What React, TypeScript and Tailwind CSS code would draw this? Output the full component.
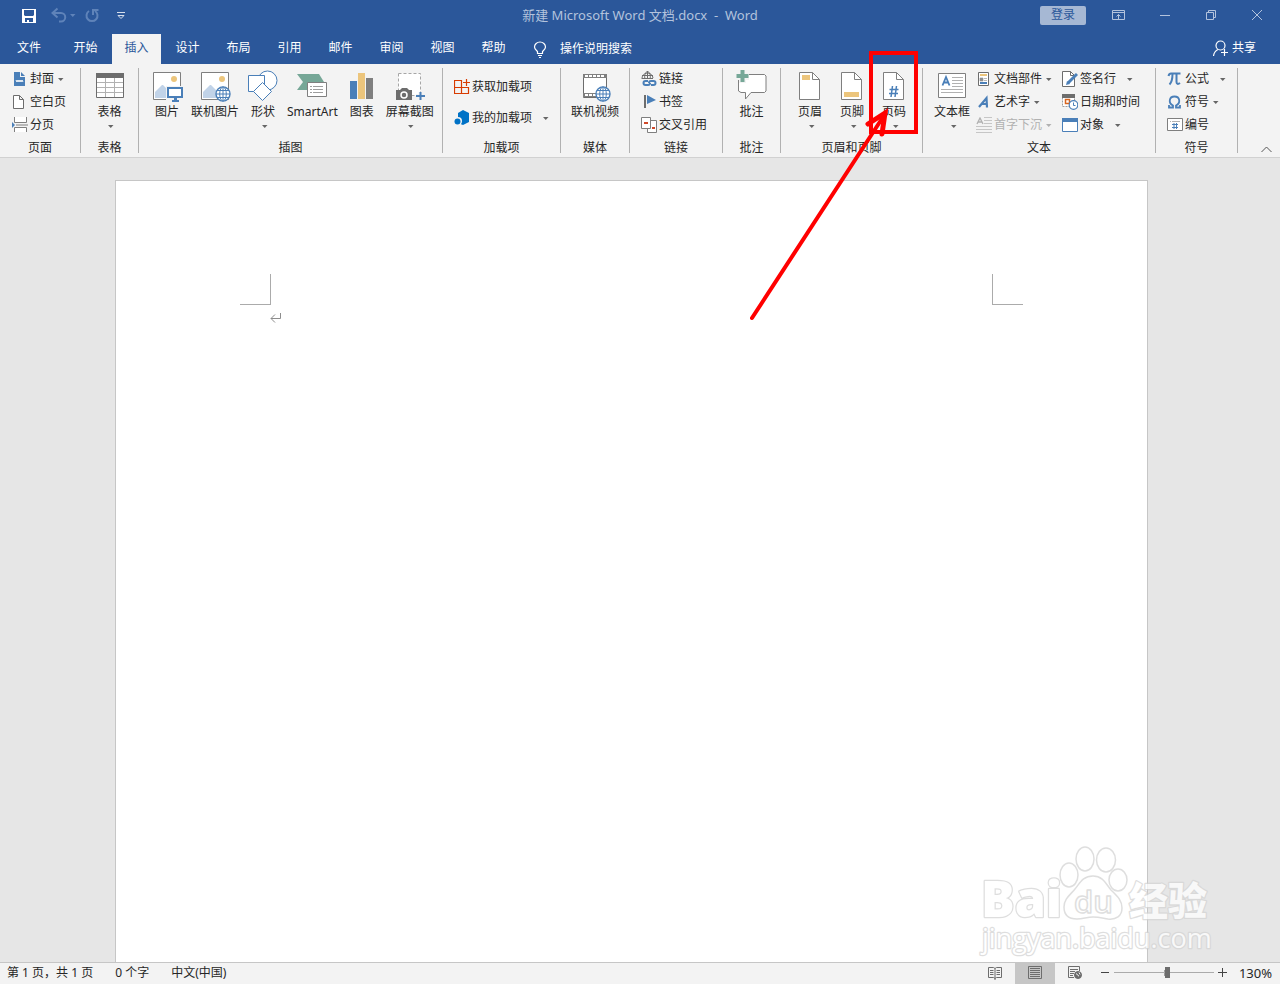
import React from 'react';

type IconProps = { children: React.ReactNode };

const Icon32: React.FC<IconProps> = ({ children }) => (
  <svg className="h-8 w-8 shrink-0" viewBox="0 0 32 32" fill="none" aria-hidden="true">
    {children}
  </svg>
);

const Icon16: React.FC<IconProps> = ({ children }) => (
  <svg className="h-4 w-4 shrink-0" viewBox="0 0 16 16" fill="none" aria-hidden="true">
    {children}
  </svg>
);

const Arrow: React.FC = () => (
  <svg className="h-2 w-[9px] shrink-0" viewBox="0 0 9 8" aria-hidden="true">
    <path d="M3 3h5.500L5.750 6z" fill="currentColor" />
  </svg>
);

const Globe: React.FC<{ x: number; y: number }> = ({ x, y }) => (
  <g transform={`translate(${x} ${y})`} stroke="#4a7fb8" fill="#fff">
    <circle r="7" strokeWidth="1.4" />
    <ellipse rx="3.3" ry="7" />
    <path d="M0-7V7M-7 0H7M-6-3.5H6M-6 3.5H6" />
  </g>
);

const Picture: React.FC = () => (
  <>
    <path d="M2.5 2.5h27v27h-27z" fill="#fff" stroke="#7f7f7f" />
    <circle cx="23" cy="9" r="3" fill="#ecc57c" />
    <path d="M4 28v-6l7-7h1l5 5v8z" fill="#c1d3e8" />
  </>
);

const Sheet: React.FC<IconProps> = ({ children }) => (
  <>
    <path d="M5.5 2.5h13l7 7v20h-20z" fill="#fff" stroke="#7f7f7f" />
    <path d="M18.5 2.5v7h7" stroke="#7f7f7f" />
    {children}
  </>
);

// Large button: icon on top, label and optional menu arrow below it
const BigButton: React.FC<{ label: string; icon: React.ReactNode; menu?: boolean }> = ({ label, icon, menu }) => (
  <button type="button" className="flex flex-col items-center whitespace-nowrap pt-[2px]">
    <Icon32>{icon}</Icon32>
    <span className="leading-5">{label}</span>
    {menu && <span className="text-[#666]"><Arrow /></span>}
  </button>
);

const SmallButton: React.FC<{
  label: string;
  icon: React.ReactNode;
  menu?: 'near' | 'far';
  disabled?: boolean;
  tall?: boolean;
}> = ({ label, icon, menu, disabled, tall }) => (
  <button
    type="button"
    disabled={disabled}
    className={`flex items-center whitespace-nowrap ${tall ? 'h-[31px]' : 'h-[21px]'} ${disabled ? 'text-[#b1b1b1]' : ''}`}
  >
    <Icon16>{icon}</Icon16>
    <span className="ml-[2px]">{label}</span>
    {menu && (
      <span className={`${menu === 'far' ? 'ml-[8px]' : 'ml-[1px]'} ${disabled ? 'text-[#b1b1b1]' : 'text-[#666]'}`}>
        <Arrow />
      </span>
    )}
  </button>
);

const Group: React.FC<{ title: string; className: string; children: React.ReactNode }> = ({ title, className, children }) => (
  <section aria-label={title} className={`flex h-[85px] shrink-0 flex-col justify-between border-r border-[#b1b1b1] ${className}`}>
    <div className="flex items-start">{children}</div>
    <div className="text-center leading-[10px]">{title}</div>
  </section>
);

const Column: React.FC<{ children: React.ReactNode; className?: string }> = ({ children, className = '' }) => (
  <div className={`flex flex-col items-start gap-[2px] ${className}`}>{children}</div>
);

const TitleBar: React.FC = () => (
  <div className="flex h-[30px] items-center text-[#b3c3dd]">
    <div className="flex flex-1 items-center">
      <button type="button" aria-label="保存" className="ml-[21px]">
        <svg className="h-4 w-4" viewBox="0 0 16 16" aria-hidden="true">
          <path d="M1 2h14v14H1z" fill="#fff" />
          <path d="M3 3h10v5l-1 1H4L3 8zM4 11h8v4h-4v-2H6v2H4z" fill="#2b579a" />
        </svg>
      </button>
      <button type="button" aria-label="撤消" className="ml-[14px] flex items-center text-[#5f83b9]">
        <svg className="h-4 w-4" viewBox="0 0 16 16" fill="none" stroke="currentColor" strokeWidth="2" aria-hidden="true">
          <path d="M6.500 1.500 1.500 6l5 4.500M2 6h8a4 4 0 0 1 0 8.500H8" />
        </svg>
        <Arrow />
      </button>
      <button type="button" aria-label="重复" className="ml-[8px] text-[#5f83b9]">
        <svg className="h-4 w-4" viewBox="0 0 16 16" fill="none" stroke="currentColor" strokeWidth="2" aria-hidden="true">
          <path d="M5 4a5.500 5.500 0 1 0 6 0M9 8V3h5.500" />
        </svg>
      </button>
      <button type="button" aria-label="自定义快速访问工具栏" className="ml-[17px]">
        <svg className="h-3 w-[9px]" viewBox="0 0 9 12" fill="none" stroke="#d5deec" aria-hidden="true">
          <path d="M0 3.500h8M1 6.500l3 3 3-3z" />
        </svg>
      </button>
    </div>
    <h1 className="whitespace-pre text-[13px]">新建 Microsoft Word 文档.docx  -  Word</h1>
    <div className="flex flex-1 items-center justify-end">
      <button type="button" className="mr-[10px] h-[19px] w-[46px] rounded-[2px] bg-[#a6b8d4] leading-[18px] text-[#2b579a]">
        登录
      </button>
      <button type="button" aria-label="功能区显示选项" className="flex w-[46px] justify-center">
        <svg className="h-4 w-4" viewBox="0 0 16 16" fill="none" stroke="#b3c3dd" aria-hidden="true">
          <path d="M1.500 3.500h12v9h-12zM1.500 5.500h12M7.500 12V7.500M5.500 9.500l2-2 2 2" />
        </svg>
      </button>
      <button type="button" aria-label="最小化" className="flex w-[46px] justify-center">
        <svg className="h-4 w-4" viewBox="0 0 16 16" stroke="#b3c3dd" aria-hidden="true">
          <path d="M3 8.500h10" />
        </svg>
      </button>
      <button type="button" aria-label="向下还原" className="flex w-[46px] justify-center">
        <svg className="h-4 w-4" viewBox="0 0 16 16" fill="none" stroke="#b3c3dd" aria-hidden="true">
          <path d="M3.500 5.500h7v7h-7zM5.500 5.500v-2h7v7h-2" />
        </svg>
      </button>
      <button type="button" aria-label="关闭" className="flex w-[46px] justify-center">
        <svg className="h-4 w-4" viewBox="0 0 16 16" stroke="#b3c3dd" aria-hidden="true">
          <path d="m3 3 10 10M13 3 3 13" />
        </svg>
      </button>
    </div>
  </div>
);

const tabs = ['开始', '插入', '设计', '布局', '引用', '邮件', '审阅', '视图', '帮助'];

const TabRow: React.FC = () => (
  <nav className="mt-1 flex h-[30px] items-stretch text-white">
    <button type="button" className="mr-[2px] w-[58px] pb-[2px]">文件</button>
    <div className="flex gap-[2px] pl-px">
      {tabs.map((tab) => (
        <button
          key={tab}
          type="button"
          className={`w-[49px] pb-[2px] ${tab === '插入' ? 'bg-[#f3f3f3] text-[#2b579a]' : ''}`}
        >
          {tab}
        </button>
      ))}
    </div>
    <button type="button" className="ml-[14px] flex items-center gap-3">
      <svg className="h-[17px] w-4" viewBox="0 0 16 17" fill="none" stroke="#fff" strokeWidth="1.200" aria-hidden="true">
        <path d="M5.500 12.500v-2C4 9 2.500 8 2.500 6a5.500 5 0 0 1 11 0c0 2-1.500 3-3 4.500v2zM6 14.500h4M7 16.500h2" />
      </svg>
      操作说明搜索
    </button>
    <button type="button" className="ml-auto mr-6 flex items-center gap-[3px] pb-[2px]">
      <svg className="h-4 w-4" viewBox="0 0 16 16" fill="none" stroke="#fff" strokeWidth="1.200" aria-hidden="true">
        <circle cx="7.500" cy="5.500" r="4.500" />
        <path d="M.5 16c.5-3.500 2-5.500 4.500-6.500M8 12.500h7M11.500 9v7" />
      </svg>
      共享
    </button>
  </nav>
);

const Callout: React.FC = () => (
  <svg
    className="pointer-events-none absolute -left-[128px] -top-[17px] z-10 h-[270px] w-[170px]"
    viewBox="0 0 170 270"
    fill="none"
    stroke="#f00"
    strokeWidth="4"
    aria-hidden="true"
  >
    <path d="M121 2h45v79h-45z" />
    <path d="M2 267 135 63" strokeLinecap="round" />
    <path d="M118 73l17-11-3 21" strokeWidth="5" strokeLinecap="round" />
  </svg>
);

const Ribbon: React.FC = () => (
  <div className="flex border-b border-[#d1d1d1] bg-[#f3f3f3] py-1">
    <Group title="页面" className="w-[81px] [&>div:first-child]:pl-3">
      <Column>
        <SmallButton
          label="封面"
          menu="near"
          icon={
            <>
              <path d="M2 1h6v5h5v9H2zM9 1l4 4H9z" fill="#4a7fb8" />
              <path d="m4 9 1 2 1-2 1 2 1-2 1 2 1-2 1 2" stroke="#fff" />
            </>
          }
        />
        <SmallButton
          label="空白页"
          icon={<path d="M1.500 1.500h6l4 4v9h-10zM7.500 1.500v4h4" fill="#fff" stroke="#6d6d6d" />}
        />
        <SmallButton
          label="分页"
          icon={
            <>
              <path d="M2.500 0v5.500h12V0M2.500 15v-4.500h12V15" fill="#fff" stroke="#7f7f7f" />
              <path d="M4 8h12" stroke="#7f7f7f" />
              <path d="m0 5 3 3-3 3z" fill="#4a7fb8" />
            </>
          }
        />
      </Column>
    </Group>

    <Group title="表格" className="w-[58px] [&>div:first-child]:justify-center">
      <BigButton
        label="表格"
        menu
        icon={
          <>
            <path d="M2.500 3.500h27v24h-27z" fill="#fff" stroke="#6d6d6d" />
            <path d="M2 3h28v5H2z" fill="#6d6d6d" />
            <path d="M3 12.500h26M3 17.500h26M3 22.500h26M11.500 8v19M20.500 8v19" stroke="#b1b1b1" />
          </>
        }
      />
    </Group>

    <Group title="插图" className="w-[304px] [&>div:first-child]:gap-2 [&>div:first-child]:pl-3">
      <BigButton
        label="图片"
        icon={
          <>
            <Picture />
            <path d="M15 16h17v14H15z" fill="#f3f3f3" />
            <path d="M17 18h14v9H17z" fill="#fff" stroke="#4a7fb8" strokeWidth="2" />
            <path d="M23 28h3v2h2v2h-7v-2h2z" fill="#4a7fb8" />
          </>
        }
      />
      <BigButton label="联机图片" icon={<><Picture /><Globe x={24} y={24} /></>} />
      <BigButton
        label="形状"
        menu
        icon={
          <g stroke="#4a7fb8" fill="#fff">
            <circle cx="20.500" cy="10.500" r="9.500" />
            <path d="M1.500 5.500h16v16h-16z" />
            <path d="m15.500 12.500 9 9-9 9-9-9z" />
          </g>
        }
      />
      <BigButton
        label="SmartArt"
        icon={
          <>
            <path d="M1 4h22l5 8-5 8H1l6-8z" fill="#76a797" />
            <path d="M11.500 12.500h19v14h-19z" fill="#fff" stroke="#7f7f7f" />
            <path d="M14 16.500h2m1 0h10M14 19.500h2m1 0h10M14 22.500h2m1 0h10" stroke="#9d9d9d" />
          </>
        }
      />
      <BigButton
        label="图表"
        icon={
          <>
            <path d="M4 11h7v18H4z" fill="#4a7fb8" />
            <path d="M12 3h7v26h-7z" fill="#ecc57c" />
            <path d="M20 8h7v21h-7z" fill="#7f7f7f" />
          </>
        }
      />
      <BigButton
        label="屏幕截图"
        menu
        icon={
          <>
            <path d="M4.500 3.500h22v22h-22z" fill="#fff" stroke="#a6a6a6" strokeDasharray="3 2" />
            <path d="M2 20h4l2-2h5l2 2h3v10H2z" fill="#6d6d6d" />
            <circle cx="10" cy="25" r="3" stroke="#fff" strokeWidth="1.500" />
            <path d="M22 26h9M26.500 22v8" stroke="#f3f3f3" strokeWidth="4" />
            <path d="M22 26h9M26.500 22v8" stroke="#4a7fb8" strokeWidth="2" />
          </>
        }
      />
    </Group>

    <Group title="加载项" className="w-[118px] [&>div:first-child]:pl-[11px] [&>div:first-child]:pt-[3px]">
      <div className="flex flex-col items-start">
        <SmallButton
          tall
          label="获取加载项"
          icon={
            <path d="M.500 1.500h7v13h-7zM.500 8.500h14v6h-14zM9 3.500h7M12.500 0v7" stroke="#d83b01" strokeWidth="1.200" />
          }
        />
        <SmallButton
          tall
          label="我的加载项"
          menu="far"
          icon={
            <>
              <path d="m9 0 6 3v9l-6 3-5-2V3z" fill="#0072c6" />
              <circle cx="4" cy="11" r="4" fill="#f3f3f3" />
              <circle cx="3.500" cy="11.500" r="3" fill="#0072c6" />
            </>
          }
        />
      </div>
    </Group>

    <Group title="媒体" className="w-[69px] [&>div:first-child]:justify-center">
      <BigButton
        label="联机视频"
        icon={
          <>
            <path d="M4.500 4.500h23v23h-23z" fill="#fff" stroke="#6d6d6d" />
            <path d="M4 4h24v4H4zM4 23h24v4H4z" fill="#7f7f7f" />
            <path d="M6 6h20M6 25h14" stroke="#fff" strokeWidth="2" strokeDasharray="3 1" />
            <Globe x={24} y={24} />
          </>
        }
      />
    </Group>

    <Group title="链接" className="w-[93px] [&>div:first-child]:pl-[11px]">
      <Column>
        <SmallButton
          label="链接"
          icon={
            <>
              <path d="M1 8a5.500 5.500 0 1 1 11-1M1 4.500h11M1 7.500h11M6.500 0v8M4 8c-1-3 0-6 2.500-8C9 2 10 5 9 8" stroke="#6d6d6d" />
              <path d="M0 8h16v8H0z" fill="#f3f3f3" />
              <path d="M7 10H4.500a2 2 0 0 0 0 4H7a2 2 0 0 0 2-2M10 14h2.500a2 2 0 0 0 0-4H10a2 2 0 0 0-2 2" stroke="#4a7fb8" strokeWidth="2" />
            </>
          }
        />
        <SmallButton
          label="书签"
          icon={
            <>
              <path d="M4 1v13" stroke="#6d6d6d" strokeWidth="2" />
              <path d="m6 1 9 5-9 4z" fill="#4a7fb8" />
            </>
          }
        />
        <SmallButton
          label="交叉引用"
          icon={
            <>
              <path d="M6.500 3.500h9v12h-9z" fill="#fff" stroke="#7f7f7f" />
              <path d="M.500.500h9v11h-9z" fill="#fff" stroke="#7f7f7f" />
              <path d="M3 5h4v2H3zM11 10h3v2h-3z" fill="#d0492a" />
            </>
          }
        />
      </Column>
    </Group>

    <Group title="批注" className="w-[58px] [&>div:first-child]:justify-center">
      <BigButton
        label="批注"
        icon={
          <>
            <path d="M3.500 4.500h25l1.500 1.500v15l-1.500 1.500H15L9.500 29v-6.500H5L2.500 21V6z" fill="#fff" stroke="#7f7f7f" />
            <path d="M3 0h7v3h3v7h-3v3H3v-3H0V3h3z" fill="#f3f3f3" />
            <path d="M4.500 0h4v4h4v4h-4v4h-4V8h-4V4h4z" fill="#76a797" />
          </>
        }
      />
    </Group>

    <Group title="页眉和页脚" className="w-[142px] [&>div:first-child]:gap-[10px] [&>div:first-child]:pl-[13px]">
      <BigButton label="页眉" menu icon={<Sheet><path d="M8 5h8v5H8z" fill="#ecc57c" /></Sheet>} />
      <BigButton label="页脚" menu icon={<Sheet><path d="M8 22h15v5H8z" fill="#ecc57c" /></Sheet>} />
      <div className="relative">
        <BigButton
          label="页码"
          menu
          icon={
            <Sheet>
              <path d="m14.500 16-1.500 11M18.500 16 17 27M11.500 19.500h9M11 23.500h9" stroke="#4a7fb8" strokeWidth="1.500" />
            </Sheet>
          }
        />
        <Callout />
      </div>
    </Group>

    <Group title="文本" className="w-[233px] [&>div:first-child]:pl-[11px]">
      <BigButton
        label="文本框"
        menu
        icon={
          <>
            <path d="M2.500 3.500h27v24h-27z" fill="#fff" stroke="#7f7f7f" />
            <path d="M6.500 15.500 10 7l3.500 8.500M7.500 12.500h5" stroke="#4a7fb8" strokeWidth="1.800" />
            <path d="M16 7.500h11M16 10.500h11M16 13.500h11M16 16.500h11M5 19.500h22M5 22.500h22" stroke="#b1b1b1" />
          </>
        }
      />
      <Column className="ml-[6px] w-[86px]">
        <SmallButton
          label="文档部件"
          menu="near"
          icon={
            <>
              <path d="M2.500 1.500h10v13h-10z" fill="#fff" stroke="#6d6d6d" />
              <path d="M4 3h7v2H4z" fill="#ecc57c" />
              <path d="M4 7h3v3H4zM8 7.500h3M8 9.500h3" fill="#8d8d8d" stroke="#8d8d8d" strokeWidth=".6" />
              <path d="M4 11h7v2H4z" fill="#4a7fb8" />
            </>
          }
        />
        <SmallButton
          label="艺术字"
          menu="near"
          icon={<path d="m3 13 7.500-9L11 13.500M5.500 10H11" stroke="#4a7fb8" strokeWidth="2.200" />}
        />
        <SmallButton
          label="首字下沉"
          menu="near"
          disabled
          icon={
            <>
              <path d="m1 7 3-6 3 6M2 5h4" stroke="#b1b1b1" strokeWidth="1.300" />
              <path d="M8 .500h8M8 3.500h8M8 6.500h8M0 9.500h16M0 12.500h16M0 15.500h16" stroke="#c6c6c6" />
            </>
          }
        />
      </Column>
      <Column>
        <SmallButton
          label="签名行"
          menu="far"
          icon={
            <>
              <path d="M.500.500h8l4 4v11H.500z" fill="#fff" stroke="#6d6d6d" />
              <path d="M8.500.500v4h4" stroke="#6d6d6d" />
              <path d="m6 12 9-9" stroke="#4a7fb8" strokeWidth="3" />
              <path d="m4 14 1-4 3 3z" fill="#4a7fb8" />
            </>
          }
        />
        <SmallButton
          label="日期和时间"
          icon={
            <>
              <path d="M.500 1.500h12v11H.500z" fill="#fff" stroke="#9d9d9d" strokeDasharray="2 1" />
              <path d="M0 0h13v4H0z" fill="#6d6d6d" />
              <path d="M3.500 5.500h4v4h-4z" stroke="#d8651f" strokeWidth="1.500" />
              <circle cx="11.500" cy="11" r="4.300" fill="#fff" stroke="#4a7fb8" strokeWidth="1.200" />
              <path d="M11.500 8.500V11.500h2" stroke="#4a7fb8" />
            </>
          }
        />
        <SmallButton
          label="对象"
          menu="far"
          icon={
            <>
              <path d="M.500 1.500h15v13H.500z" fill="#fff" stroke="#4a7fb8" />
              <path d="M0 1h16v4H0z" fill="#4a7fb8" />
            </>
          }
        />
      </Column>
    </Group>

    <Group title="符号" className="w-[82px] [&>div:first-child]:pl-[11px]">
      <Column>
        <SmallButton
          label="公式"
          menu="far"
          icon={<path d="M1.500 5C2 3 3 2.500 4 2.500h9.500M5.500 3c0 4-.500 8-3 10.500M9.500 3v8c0 2 1.500 2.500 3.500 1" stroke="#4a7fb8" strokeWidth="2" />}
        />
        <SmallButton
          label="符号"
          menu="near"
          icon={<path d="M2 11v2.500h4V11.500C1 9 2 2.500 7.500 2.500S14 9 9 11.500v2h4V11" stroke="#4a7fb8" strokeWidth="1.800" />}
        />
        <SmallButton
          label="编号"
          icon={
            <>
              <path d="M.500 1.500h15v12H.500z" fill="#fff" stroke="#7f7f7f" />
              <path d="M3 4.500h1m1 0h8" stroke="#b1b1b1" />
              <path d="M7 6v6M9.500 6v6M5 7.500h6M5 10.500h6" stroke="#4a7fb8" />
            </>
          }
        />
      </Column>
    </Group>

    <button type="button" aria-label="折叠功能区" className="ml-auto mr-2 self-end">
      <svg className="h-[7px] w-[11px]" viewBox="0 0 11 7" fill="none" stroke="#555" aria-hidden="true">
        <path d="m.5 6 5-5 5 5" />
      </svg>
    </button>
  </div>
);

const Watermark: React.FC = () => (
  <svg
    className="pointer-events-none absolute bottom-0 right-[64px] h-[122px] w-[240px] font-['Open_Sans','Noto_Sans_CJK_SC',sans-serif] opacity-75"
    viewBox="0 0 240 122"
    fill="#fff"
    stroke="#d4d4d4"
    strokeWidth="2.500"
    strokeLinejoin="round"
    aria-label="Baidu 经验"
  >
    <g className="[paint-order:stroke]">
      <text x="5" y="77" fontSize="50" fontWeight="800">Bai</text>
      <text x="153" y="75" fontSize="39" fontWeight="900">经验</text>
      <text x="6" y="108" fontSize="27" fontWeight="500">jingyan.baidu.com</text>
    </g>
    <g strokeWidth="1.500">
      <ellipse cx="93" cy="35" rx="9" ry="12" />
      <ellipse cx="109" cy="19" rx="9" ry="12" />
      <ellipse cx="130" cy="20" rx="9.500" ry="12" />
      <ellipse cx="142" cy="40" rx="9" ry="11" />
      <path d="M117 36c10 0 13 8 18 14 6 6 11 10 11 18 0 8-6 12-14 11-6-1-9-2-15-2s-10 2-16 2c-9 0-13-5-13-12 0-8 6-12 11-18s8-13 18-13z" />
    </g>
    <text x="98" y="73" fontSize="31" fontWeight="600" strokeWidth="1.500">du</text>
  </svg>
);

const DocumentArea: React.FC = () => (
  <main className="relative flex flex-1 flex-col bg-[#e6e6e6] pr-[17px] pt-[22px]">
    <article className="mx-auto w-[1033px] max-w-full flex-1 border border-b-0 border-[#c6c6c6] bg-white px-[124px] pt-[93px]">
      <div className="flex justify-between">
        <div className="h-[31px] w-[31px] border-b border-r border-[#ababab]" />
        <div className="h-[31px] w-[31px] border-b border-l border-[#ababab]" />
      </div>
      <p className="px-[30px] pt-[7px]">
        <svg className="h-3 w-3" viewBox="0 0 12 12" fill="none" stroke="#8d8d8d" aria-hidden="true">
          <path d="M10.500 1v5.500H1M5 2.500l-4 4 4 4" />
        </svg>
      </p>
    </article>
    <Watermark />
  </main>
);

const StatusBar: React.FC = () => (
  <footer className="flex h-[22px] items-stretch border-t border-[#c6c6c6] bg-[#f3f3f3] pl-[7px] pr-2">
    <div className="flex items-center gap-[22px] pb-[2px]">
      <span>第 1 页，共 1 页</span>
      <span>0 个字</span>
      <span>中文(中国)</span>
    </div>
    <div className="ml-auto flex items-stretch">
      <button type="button" aria-label="阅读视图" className="flex w-10 items-center justify-center pb-[2px]">
        <svg className="h-[14px] w-[14px]" viewBox="0 0 14 14" fill="none" stroke="#6d6d6d" aria-hidden="true">
          <path d="M.500 1.500h5l1.500 1 1.500-1h5v10h-5l-1.500 1-1.500-1h-5zM7 2.500V14M2 4.500h3.500M2 6.500h3.500M2 8.500h3.500M8.500 4.500H12M8.500 6.500H12M8.500 8.500H12" />
        </svg>
      </button>
      <button type="button" aria-label="页面视图" className="flex w-10 items-center justify-center bg-[#c6c6c6] pb-[2px]">
        <svg className="h-[14px] w-[14px]" viewBox="0 0 14 14" fill="none" stroke="#6d6d6d" aria-hidden="true">
          <path d="M.500.500h13v12H.500zM2 2.500h10M2 4.500h10M2 6.500h10M2 8.500h10M2 10.500h10" />
        </svg>
      </button>
      <button type="button" aria-label="Web 版式视图" className="flex w-10 items-center justify-center pb-[2px]">
        <svg className="h-[14px] w-[14px]" viewBox="0 0 14 14" fill="none" stroke="#6d6d6d" aria-hidden="true">
          <path d="M6 11.500H.500V.500h11V5M2 3.500h8M2 5.500h5M2 7.500h4M2 9.500h3" />
          <circle cx="10" cy="9" r="3.500" fill="#6d6d6d" />
          <path d="M8 8c2-1 1 2 3 2M11 6.500l1 2" stroke="#f3f3f3" />
        </svg>
      </button>
      <button type="button" aria-label="缩小" className="ml-[5px] flex w-[9px] items-center pb-[2px]">
        <svg className="h-[9px] w-[9px]" viewBox="0 0 9 9" stroke="#444" aria-hidden="true">
          <path d="M1 4.500h8" />
        </svg>
      </button>
      <div className="relative ml-[5px] flex w-[100px] items-center pb-[2px]">
        <span className="absolute left-[50px] top-[7px] h-[6px] w-px bg-[#9d9d9d]" />
        <input
          type="range"
          aria-label="显示比例"
          min={0}
          max={100}
          defaultValue={54}
          className="relative h-3 w-full appearance-none bg-transparent [&::-webkit-slider-runnable-track]:h-px [&::-webkit-slider-runnable-track]:bg-[#ababab] [&::-webkit-slider-thumb]:-mt-[5px] [&::-webkit-slider-thumb]:h-[11px] [&::-webkit-slider-thumb]:w-[5px] [&::-webkit-slider-thumb]:appearance-none [&::-webkit-slider-thumb]:bg-[#6d6d6d]"
        />
      </div>
      <button type="button" aria-label="放大" className="ml-1 flex w-[9px] items-center pb-[2px]">
        <svg className="h-[9px] w-[9px]" viewBox="0 0 9 9" stroke="#444" aria-hidden="true">
          <path d="M0 4.500h9M4.500 0v9" />
        </svg>
      </button>
      <button type="button" className="ml-3 pb-[2px] text-[13px]">130%</button>
    </div>
  </footer>
);

const App: React.FC = () => {
  return (
    <div className="flex min-h-screen flex-col font-['Noto_Sans','Noto_Sans_CJK_SC',sans-serif] text-[12px] leading-4 text-[#262626]">
      <header>
        <div className="bg-[#2b579a]">
          <TitleBar />
          <TabRow />
        </div>
        <Ribbon />
      </header>
      <DocumentArea />
      <StatusBar />
    </div>
  );
};

export default App;
